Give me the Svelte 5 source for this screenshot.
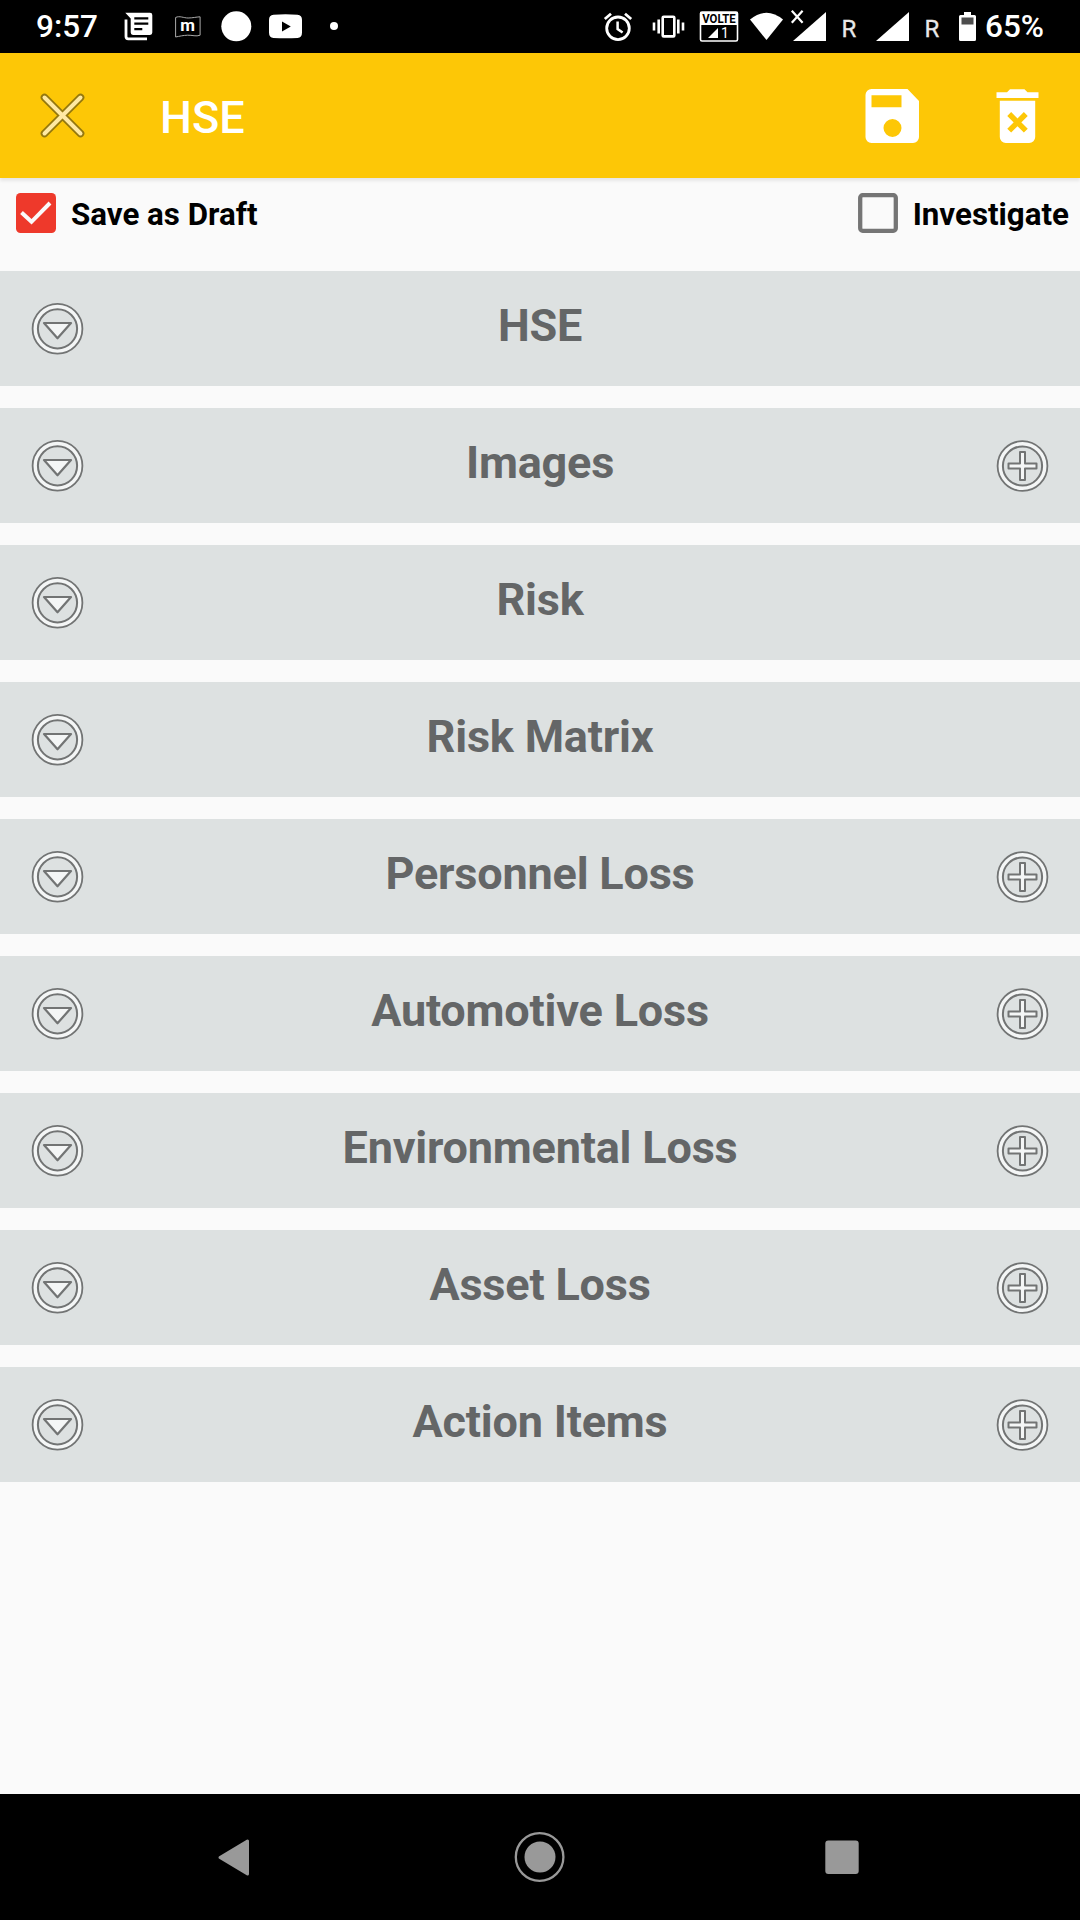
<script>
  const sections = [
    { title: 'HSE', add: false },
    { title: 'Images', add: true },
    { title: 'Risk', add: false },
    { title: 'Risk Matrix', add: false },
    { title: 'Personnel Loss', add: true },
    { title: 'Automotive Loss', add: true },
    { title: 'Environmental Loss', add: true },
    { title: 'Asset Loss', add: true },
    { title: 'Action Items', add: true },
  ];
</script>

<div class="screen">
  <header class="status">
    <span class="clock">9:57</span>
    <!-- news -->
    <svg width="46" height="53" viewBox="118 0 46 53">
      <path d="M126 19.5V36.5a2.3 2.3 0 0 0 2.3 2.3H147" fill="none" stroke="#fff" stroke-width="2.8" />
      <path fill="#fff" fill-rule="evenodd" d="M125.3 12.8H150a2.3 2.3 0 0 1 2.3 2.3V32.6a2.3 2.3 0 0 1-2.3 2.3H133a2.3 2.3 0 0 1-2.3-2.3V18.5zM134.3 17.3v2.3h14v-2.3zM134.3 22.5v2.3h14v-2.3zM134.3 28v2.3h8v-2.3z" />
    </svg>
    <!-- flag -->
    <svg width="48" height="53" viewBox="164 0 48 53">
      <path d="M175.6 17.5c4-2 8 .5 12.5 .5s8-1 12-1.2v18.4c-4 1.6-8-.2-12.5 0s-8 1-12 1.800z" fill="none" stroke="#aaa" stroke-width="1" />
      <text x="187.5" y="31" class="flag-letter" text-anchor="middle">m</text>
    </svg>
    <svg width="48" height="53" viewBox="212 0 48 53"><circle cx="236.300" cy="26.300" r="15" fill="#fff" /></svg>
    <!-- video -->
    <svg width="52" height="53" viewBox="260 0 52 53">
      <path fill="#fff" fill-rule="evenodd" d="M273.5 14.8Q285.5 13.8 297.5 14.8Q302 15.2 302 20V32.5Q302 37.6 297.5 38Q285.5 38.6 273.5 38Q269 37.6 269 32.5V20Q269 15.2 273.5 14.8zM282 21.5v10l8.800-5z" />
    </svg>
    <svg width="44" height="53" viewBox="312 0 44 53"><circle cx="334" cy="26" r="4" fill="#fff" /></svg>
    <span class="grow"></span>
    <!-- alarm -->
    <svg width="46" height="53" viewBox="596 0 46 53" fill="none" stroke="#fff">
      <circle cx="618" cy="28.300" r="11.300" stroke-width="2.800" />
      <path d="M617.6 21.5v7.5l5 3.5" stroke-width="2.5" />
      <path d="M604.8 19l6.2-5.2M631.2 19l-6.2-5.2" stroke-width="2.800" />
    </svg>
    <!-- vibrate -->
    <svg width="50" height="53" viewBox="642 0 50 53" fill="none" stroke="#fff" stroke-width="2.600">
      <rect x="662.700" y="16.800" width="11.600" height="19.600" rx="1" />
      <path d="M658.7 19.5v14M678.3 19.5v14M654 22.5v8M683 22.5v8" />
    </svg>
    <!-- volte -->
    <svg width="52" height="53" viewBox="692 0 52 53">
      <rect x="700.500" y="12" width="37" height="29" rx="1.500" fill="#000" stroke="#fff" stroke-width="1.600" />
      <rect x="700.500" y="12" width="37" height="13" fill="#fff" />
      <text x="719" y="23.200" class="volte" text-anchor="middle" textLength="33.500" lengthAdjust="spacingAndGlyphs">VOLTE</text>
      <path d="M708 38h10V28z" fill="#fff" />
      <text x="725" y="38" class="sim" text-anchor="middle">1</text>
    </svg>
    <!-- wifi -->
    <svg width="44" height="53" viewBox="744 0 44 53"><path d="M750 19.5Q766.5 6 783 19.5L766.5 40z" fill="#fff" /></svg>
    <!-- signal, no data -->
    <svg width="46" height="53" viewBox="788 0 46 53">
      <path d="M793 41h33V12z" fill="#fff" />
      <path d="M791.8 10.8l10.8 12M802.6 10.8l-10.8 12" stroke="#fff" stroke-width="2.200" />
    </svg>
    <svg width="34" height="53" viewBox="834 0 34 53"><text x="841.500" y="36.600" class="roam">R</text></svg>
    <svg width="50" height="53" viewBox="868 0 50 53"><path d="M876 41h33V12z" fill="#fff" /></svg>
    <svg width="32" height="53" viewBox="918 0 32 53"><text x="924.500" y="36.600" class="roam">R</text></svg>
    <!-- battery -->
    <svg width="34" height="53" viewBox="950 0 34 53">
      <path d="M964 12h7v3h3.500a1.500 1.500 0 0 1 1.500 1.500V39.500a1.500 1.500 0 0 1-1.500 1.500H960.500a1.500 1.500 0 0 1-1.500-1.500V16.500a1.500 1.500 0 0 1 1.500-1.500H964z" fill="#fff" />
      <rect x="961.500" y="17.500" width="12" height="7" fill="#4d4d4d" />
    </svg>
    <span class="percent">65%</span>
  </header>

  <div class="toolbar">
    <svg class="close" width="50" height="50" viewBox="-0.5 -0.5 50 50" stroke-linecap="round">
      <path d="M6 6L42 42M42 6L6 42" stroke="#94780f" stroke-width="7.600" />
      <path d="M6 6L42 42M42 6L6 42" stroke="#ffe9a3" stroke-width="4" />
    </svg>
    <h1>HSE</h1>
    <svg class="save" width="54" height="54" viewBox="-0.5 0 54 54">
      <path fill="#fff" fill-rule="evenodd" d="M6 0H42L53.500 12V48a6 6 0 0 1-6 6H6a6 6 0 0 1-6-6V6A6 6 0 0 1 6 0zM6 6.300V18.300H36V6.300zM27 30a9 9 0 1 0 0 18a9 9 0 1 0 0-18z" />
    </svg>
    <svg class="trash" width="43" height="54" viewBox="0 0 43 54">
      <path d="M.5 9V3.300H11L14 .3H28.500L31.500 3.300H42.500V9z" fill="#fff" />
      <path d="M3.800 11.800H39.200V48a6 6 0 0 1-6 6H9.800a6 6 0 0 1-6-6z" fill="#fff" />
      <path d="M13.200 25L29.800 41.600M29.800 25L13.200 41.600" stroke="#fdc706" stroke-width="5.500" />
    </svg>
  </div>

  <div class="checks">
    <div class="check">
      <svg width="40" height="40" viewBox="0 0 40 40">
        <rect width="40" height="40" rx="4.500" fill="#ee392b" />
        <path d="M5.500 19.500L15.500 28.800L34 10" fill="none" stroke="#fafafa" stroke-width="4" />
      </svg>
      <span>Save as Draft</span>
    </div>
    <div class="check">
      <svg width="40" height="40" viewBox="0 0 40 40">
        <rect x="2.200" y="2.200" width="35.600" height="35.600" rx="2.500" fill="none" stroke="#757575" stroke-width="4.300" />
      </svg>
      <span>Investigate</span>
    </div>
  </div>

  <main>
    {#each sections as section}
      <section>
        <svg width="54" height="54" viewBox="-27.5 -26.8 54 54" fill="none">
          <circle r="22.200" stroke="#727474" stroke-width="7.200" />
          <circle r="22.300" stroke="#f4f6f6" stroke-width="3.400" />
          <path d="M-13.500 -5.800H13.500L0 9.500z" fill="#f4f6f6" stroke="#727474" stroke-width="2.200" stroke-linejoin="round" />
        </svg>
        <h2>{section.title}</h2>
        {#if section.add}
          <svg width="54" height="54" viewBox="-27.5 -27 54 54" fill="none">
            <circle r="22.200" stroke="#727474" stroke-width="7.200" />
            <circle r="22.300" stroke="#f4f6f6" stroke-width="3.400" />
            <path d="M-2.500 -14H2.500V-2.500H14V2.500H2.500V14H-2.500V2.500H-14V-2.500H-2.500z" fill="#f4f6f6" stroke="#727474" stroke-width="2" stroke-linejoin="round" />
          </svg>
        {:else}
          <span class="blank"></span>
        {/if}
      </section>
    {/each}
  </main>

  <nav>
    <svg width="60" height="60" viewBox="0 0 60 60"><path d="M12 30.500L39.500 14V47z" fill="#999" stroke="#999" stroke-width="3" stroke-linejoin="round" /></svg>
    <svg width="60" height="60" viewBox="0 0 60 60">
      <circle cx="29.600" cy="30" r="23.800" fill="none" stroke="#999" stroke-width="2.300" />
      <circle cx="30" cy="30" r="15.500" fill="#999" />
    </svg>
    <svg width="60" height="60" viewBox="0 0 60 60"><rect x="13.300" y="13.500" width="33.400" height="33.400" rx="3" fill="#999" /></svg>
  </nav>
</div>

<style>
  :global(body) {
    background: #fafafa;
  }
  .screen {
    width: 1080px;
    height: 1920px;
    display: flex;
    flex-direction: column;
    background: #fafafa;
    font-family: Roboto, sans-serif;
    overflow: hidden;
  }
  svg {
    display: block;
    flex: none;
  }
  .status {
    height: 53px;
    flex: none;
    display: flex;
    background: #000;
    color: #fff;
    font-size: 31.5px;
    font-weight: 500;
    line-height: 54px;
  }
  .clock {
    width: 118px;
    padding-left: 36px;
    box-sizing: border-box;
  }
  .percent {
    width: 96px;
    padding-left: 1px;
    box-sizing: border-box;
  }
  .grow {
    flex: 1;
  }
  .flag-letter {
    font-size: 17px;
    font-weight: 700;
    fill: #fff;
  }
  .volte {
    font-size: 12px;
    font-weight: 700;
    fill: #000;
  }
  .sim {
    font-size: 14px;
    font-weight: 400;
    fill: #fff;
  }
  .roam {
    font-size: 24px;
    font-weight: 400;
    fill: #e8e8e8;
    stroke: #e8e8e8;
    stroke-width: 0.3px;
  }
  .toolbar {
    height: 125px;
    flex: none;
    display: flex;
    align-items: center;
    background: #fdc706;
    box-shadow: 0 3px 3px rgba(0, 0, 0, 0.08);
    padding: 0 41px 0 38px;
  }
  .close {
    margin-top: 1px;
  }
  h1 {
    flex: 1;
    margin: 5px 0 0 72px;
    color: #fff;
    font-size: 45px;
    font-weight: 500;
    line-height: 52px;
  }
  .save {
    margin-right: 77px;
  }
  .checks {
    height: 93px;
    flex: none;
    display: flex;
    justify-content: space-between;
    align-items: flex-start;
    box-sizing: border-box;
    padding: 15px 11px 0 16px;
  }
  .check {
    display: flex;
    align-items: center;
    gap: 15px;
    color: #000;
    font-size: 31.3px;
    font-weight: 700;
    line-height: 40px;
  }
  .check span {
    padding-top: 2px;
    margin-bottom: -2px;
  }
  main {
    flex: 1;
    display: flex;
    flex-direction: column;
    gap: 22px;
  }
  section {
    height: 115px;
    flex: none;
    box-sizing: border-box;
    padding: 0 31px 0 30px;
    display: flex;
    align-items: center;
    background: #dde1e1;
  }
  h2 {
    flex: 1;
    margin: 0 0 6px 1px;
    text-align: center;
    color: #646667;
    font-size: 45px;
    font-weight: 700;
    line-height: 54px;
    letter-spacing: -0.2px;
  }
  .blank {
    width: 54px;
  }
  nav {
    height: 126px;
    flex: none;
    box-sizing: border-box;
    display: flex;
    justify-content: space-between;
    align-items: center;
    padding: 0 208px;
    background: #000;
  }
</style>
